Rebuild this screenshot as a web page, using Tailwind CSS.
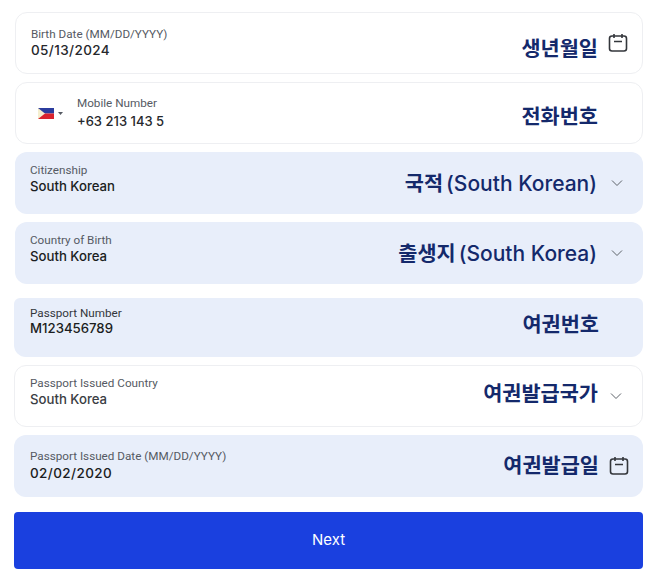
<!DOCTYPE html>
<html lang="ko">
<head>
<meta charset="utf-8">
<script src="https://cdn.jsdelivr.net/npm/@tailwindcss/browser@4"></script>
</head>
<body class="bg-white font-['Inter','Noto_Sans_CJK_KR',sans-serif]">
<main class="w-[656px] h-[582px] overflow-hidden pt-3 pl-[14px] pr-[13px] flex flex-col">

  <div class="flex items-center justify-between h-[62px] ml-px rounded-xl border border-[#eeeff2] bg-white pl-[15px] pr-[14px]">
    <div class="-mt-[2px]">
      <p class="text-[11.7px] leading-4 text-[#555a63] font-['Roboto',sans-serif]">Birth Date (MM/DD/YYYY)</p>
      <p class="text-[13.5px] leading-[17px] font-medium tracking-[0.4px] text-[#26282c]">05/13/2024</p>
    </div>
    <div class="flex items-center gap-[10px]">
      <span class="mt-2 text-[20.8px] font-bold leading-7 text-[#14296b] font-['Noto_Sans_CJK_KR',sans-serif]">생년월일</span>
      <svg class="w-5 h-5 text-[#33363b]" viewBox="0 0 20 20" fill="none" stroke="currentColor" stroke-width="1.6"><rect x="1.5" y="3" width="17" height="15" rx="2.5"/><path d="M6 1v4M14 1v4M6 8.5h8"/></svg>
    </div>
  </div>

  <div class="flex items-center justify-between h-[62px] mt-2 ml-px rounded-xl border border-[#eeeff2] bg-white pl-[22px] pr-11">
    <div class="flex items-center">
      <svg class="w-4 h-[11px]" viewBox="0 0 16 11"><path d="M0 0h16v5.5H0z" fill="#2b3c9e"/><path d="M0 5.5h16V11H0z" fill="#d8232f"/><path d="M0 0l7 5.5L0 11z" fill="#f5efd0"/></svg>
      <svg class="w-[5px] h-[3px] ml-1 mr-[14px]" viewBox="0 0 5 3"><path d="M0 0h5L2.5 3z" fill="#555a63"/></svg>
      <div class="-mt-px">
        <p class="text-[11.7px] leading-4 text-[#555a63] font-['Roboto',sans-serif]">Mobile Number</p>
        <p class="text-[13px] leading-[20px] font-medium text-[#26282c]">+63 213 143 5</p>
      </div>
    </div>
    <span class="mt-[3px] text-[20.8px] font-bold leading-7 text-[#14296b] font-['Noto_Sans_CJK_KR',sans-serif]">전화번호</span>
  </div>

  <div class="flex items-center justify-between h-[62px] mt-2 ml-px rounded-xl bg-[#e8eefa] pl-[15px] pr-5">
    <div class="-mt-[11px]">
      <p class="text-[11.7px] leading-4 text-[#555a63] font-['Roboto',sans-serif]">Citizenship</p>
      <p class="text-[13.2px] leading-4 font-medium text-[#1b1d21]">South Korean</p>
    </div>
    <div class="flex items-center gap-[14px]">
      <span class="text-[20.8px] font-bold leading-7 text-[#14296b] font-['Noto_Sans_CJK_KR',sans-serif]">국적<span class="text-[21px] font-medium font-['Inter',sans-serif] ml-[3px]">(South Korean)</span></span>
      <svg class="w-3 h-2" viewBox="0 0 12 8" fill="none" stroke="#5d6269" stroke-width="1"><path d="M1 1.5l5 5 5-5"/></svg>
    </div>
  </div>

  <div class="flex items-center justify-between h-[62px] mt-2 ml-px rounded-xl bg-[#e8eefa] pl-[15px] pr-5">
    <div class="-mt-[11px]">
      <p class="text-[11.7px] leading-4 text-[#555a63] font-['Roboto',sans-serif]">Country of Birth</p>
      <p class="text-[13.2px] leading-4 font-medium text-[#1b1d21]">South Korea</p>
    </div>
    <div class="flex items-center gap-[14px]">
      <span class="text-[20.8px] font-bold leading-7 text-[#14296b] font-['Noto_Sans_CJK_KR',sans-serif]">출생지<span class="text-[21px] font-medium font-['Inter',sans-serif] ml-[3px]">(South Korea)</span></span>
      <svg class="w-3 h-2" viewBox="0 0 12 8" fill="none" stroke="#5d6269" stroke-width="1"><path d="M1 1.5l5 5 5-5"/></svg>
    </div>
  </div>

  <div class="flex items-center justify-between h-[59px] mt-[14px] rounded-xl rounded-t-md bg-[#e8eefa] pl-4 pr-11">
    <div class="-mt-[14px]">
      <p class="text-[11.7px] leading-4 text-[#33363b] font-['Roboto',sans-serif]">Passport Number</p>
      <p class="text-[13.2px] leading-[15px] font-medium text-[#1b1d21]">M123456789</p>
    </div>
    <span class="text-[20.8px] font-bold leading-7 -mt-[10px] text-[#14296b] font-['Noto_Sans_CJK_KR',sans-serif]">여권번호</span>
  </div>

  <div class="flex items-center justify-between h-[62px] mt-2 rounded-xl border border-[#eeeff2] bg-white pl-[15px] pr-5">
    <div class="-mt-[11px]">
      <p class="text-[11.7px] leading-4 text-[#555a63] font-['Roboto',sans-serif]">Passport Issued Country</p>
      <p class="text-[13.2px] leading-4 font-medium text-[#3a3d43]">South Korea</p>
    </div>
    <div class="flex items-center gap-[12px]">
      <span class="-mt-[8px] text-[20.8px] font-bold leading-7 text-[#14296b] font-['Noto_Sans_CJK_KR',sans-serif]">여권발급국가</span>
      <svg class="w-3 h-2" viewBox="0 0 12 8" fill="none" stroke="#5d6269" stroke-width="1"><path d="M1 1.5l5 5 5-5"/></svg>
    </div>
  </div>

  <div class="flex items-center justify-between h-[62px] mt-2 rounded-xl bg-[#e8eefa] pl-4 pr-[14px]">
    <div class="-mt-[3px]">
      <p class="text-[11.7px] leading-4 text-[#555a63] font-['Roboto',sans-serif]">Passport Issued Date (MM/DD/YYYY)</p>
      <p class="text-[13.5px] leading-[18px] font-medium tracking-[0.4px] text-[#1b1d21]">02/02/2020</p>
    </div>
    <div class="flex items-center gap-[10px]">
      <span class="-mt-[5px] text-[20.8px] font-bold leading-7 text-[#14296b] font-['Noto_Sans_CJK_KR',sans-serif]">여권발급일</span>
      <svg class="w-5 h-5 text-[#33363b]" viewBox="0 0 20 20" fill="none" stroke="currentColor" stroke-width="1.6"><rect x="1.5" y="3" width="17" height="15" rx="2.5"/><path d="M6 1v4M14 1v4M6 8.5h8"/></svg>
    </div>
  </div>

  <button class="mt-[15px] h-[57px] rounded-[4px] bg-[#1a40df] text-white text-[15px] font-normal">Next</button>
</main>
</body>
</html>
